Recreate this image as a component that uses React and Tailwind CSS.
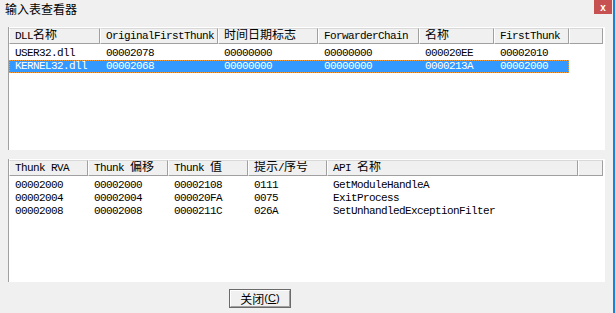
import React from 'react';

const cjkRe = /([\u3000-\u9fff\uff00-\uffef]+)/;

function T({ s }) {
  return s.split(cjkRe).map((part, i) =>
    i % 2 === 1 ? (
      <span key={i} className="text-[12px] tracking-normal">{part}</span>
    ) : (
      part
    )
  );
}

const dllCols = [
  { label: 'DLL名称', w: 'w-[91px]' },
  { label: 'OriginalFirstThunk', w: 'w-[118px]' },
  { label: '时间日期标志', w: 'w-[100px]' },
  { label: 'ForwarderChain', w: 'w-[101px]' },
  { label: '名称', w: 'w-[75px]' },
  { label: 'FirstThunk', w: 'w-[75px]' },
  { label: '', w: 'w-[34px]' },
];

const dllRows = [
  ['USER32.dll', '00002078', '00000000', '00000000', '000020EE', '00002010'],
  ['KERNEL32.dll', '00002068', '00000000', '00000000', '0000213A', '00002000'],
];

const thunkCols = [
  { label: 'Thunk RVA', w: 'w-[79px]' },
  { label: 'Thunk 偏移', w: 'w-[80px]' },
  { label: 'Thunk 值', w: 'w-[80px]' },
  { label: '提示/序号', w: 'w-[79px]' },
  { label: 'API 名称', w: 'w-[251px]' },
  { label: '', w: 'w-[25px]' },
];

const thunkRows = [
  ['00002000', '00002000', '00002108', '0111', 'GetModuleHandleA'],
  ['00002004', '00002004', '000020FA', '0075', 'ExitProcess'],
  ['00002008', '00002008', '0000211C', '026A', 'SetUnhandledExceptionFilter'],
];

function Header({ cols }) {
  return (
    <div className="flex mt-[1px]">
      {cols.map((c, i) => (
        <div
          key={i}
          className={`${c.w} h-[16px] shrink-0 bg-[#f0f0f0] border-t border-t-[#d8d8d8] border-b border-b-[#a0a0a0] border-r border-r-[#a0a0a0] border-l border-l-white pl-[5px] leading-[14px] whitespace-nowrap overflow-hidden text-black`}
        >
          <T s={c.label} />
        </div>
      ))}
    </div>
  );
}

function Row({ cols, cells, selected }) {
  return (
    <div
      className={`flex h-[13px] leading-[13px] ${
        selected
          ? 'bg-[#3399ff] text-white outline-1 outline-dotted outline-[#f29b38] -outline-offset-1'
          : 'text-black'
      } w-fit`}
    >
      {cells.map((cell, i) => (
        <div key={i} className={`${cols[i].w} shrink-0 pl-[6px] whitespace-nowrap overflow-hidden`}>
          {cell}
        </div>
      ))}
    </div>
  );
}

function ListView({ cols, rows, selectedIndex }) {
  return (
    <div className="mx-[8px] h-[123px] bg-white border-l border-[#a0a0a0] overflow-hidden font-['Liberation_Mono','Noto_Sans_CJK_SC',monospace] text-[11px] tracking-[-0.6px]">
      <Header cols={cols} />
      <div className="pt-[3px]">
        {rows.map((r, i) => (
          <Row key={i} cols={cols} cells={r} selected={i === selectedIndex} />
        ))}
      </div>
    </div>
  );
}

export default function App() {
  return (
    <div className="w-[615px] h-[313px] bg-[#f0f0f0] flex overflow-hidden">
      <div className="flex-1 flex flex-col">
        <div className="h-[27px] flex justify-between items-start">
          <span className="pl-[5px] pt-[1px] leading-[16px] text-[12px] text-black font-['Noto_Sans_CJK_SC',sans-serif]">
            输入表查看器
          </span>
          <button className="w-[18px] h-[14px] mr-[1px] bg-[#c75050] text-white text-[10px] font-bold leading-[13px] font-['Liberation_Sans',sans-serif] flex items-center justify-center">
            x
          </button>
        </div>

        <ListView cols={dllCols} rows={dllRows} selectedIndex={1} />

        <div className="h-[9px]" />

        <ListView cols={thunkCols} rows={thunkRows} selectedIndex={-1} />

        <div className="mt-[7px] ml-[229px] w-[62px] h-[19px] border border-[#6a6a6a] bg-[#f0f0f0]">
          <div className="h-full border-t border-l border-t-white border-l-white border-b border-r border-b-[#a0a0a0] border-r-[#a0a0a0] flex items-center justify-center text-black leading-none">
            <span className="text-[12px] font-['Noto_Sans_CJK_SC',sans-serif]">关闭</span>
            <span className="text-[11px] font-['Liberation_Sans',sans-serif]">
              (<span className="underline">C</span>)
            </span>
          </div>
        </div>
      </div>
      <div className="w-[2px] h-full bg-[#1883d7]" />
    </div>
  );
}
